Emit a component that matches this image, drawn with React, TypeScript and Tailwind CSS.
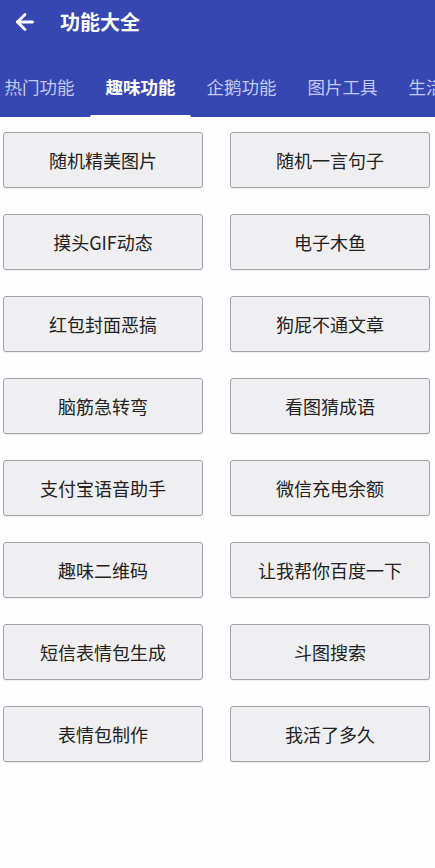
import { ArrowLeft } from 'lucide-react';

const tabs = ['热门功能', '趣味功能', '企鹅功能', '图片工具', '生活服务'];

const items = [
  '随机精美图片',
  '随机一言句子',
  '摸头GIF动态',
  '电子木鱼',
  '红包封面恶搞',
  '狗屁不通文章',
  '脑筋急转弯',
  '看图猜成语',
  '支付宝语音助手',
  '微信充电余额',
  '趣味二维码',
  '让我帮你百度一下',
  '短信表情包生成',
  '斗图搜索',
  '表情包制作',
  '我活了多久',
];

export default function App() {
  const active = 1;

  return (
    <div
      className="w-[435px] h-[868px] overflow-hidden bg-[#fdfdfe]"
      style={{ fontFamily: '"Noto Sans CJK SC", "Noto Sans", sans-serif' }}
    >
      <div className="bg-[#3647b2] h-[117px] flex flex-col">
        <div className="flex items-center h-[43px] pt-[1px] pl-[12px]">
          <ArrowLeft className="w-[26px] h-[26px] text-white" strokeWidth={2.6} />
          <span className="ml-[22px] text-white text-[20px] font-bold leading-none">功能大全</span>
        </div>
        <div className="flex mt-auto ml-[-11px] whitespace-nowrap">
          {tabs.map((t, i) => (
            <div key={t} className="relative shrink-0 w-[101px] h-[70px] flex items-center justify-center pt-[11px]">
              <span
                className={
                  i === active
                    ? 'text-white text-[17.5px] font-bold'
                    : 'text-[#c4caee] text-[17.5px]'
                }
              >
                {t}
              </span>
              {i === active && (
                <div className="absolute bottom-[-2px] left-0 right-0 h-[4px] bg-white rounded-t-[2px]" />
              )}
            </div>
          ))}
        </div>
      </div>

      <div className="grid grid-cols-[200px_200px] gap-x-[27px] gap-y-[26px] pl-[3px] pt-[15px]">
        {items.map((it) => (
          <div
            key={it}
            className="h-[56px] flex items-center justify-center bg-[#efeff1] border border-[#a3a3a6] rounded-[3px] text-[18px] text-[#222] shadow-[0_1px_1px_rgba(0,0,0,0.06)]"
          >
            {it}
          </div>
        ))}
      </div>
    </div>
  );
}
